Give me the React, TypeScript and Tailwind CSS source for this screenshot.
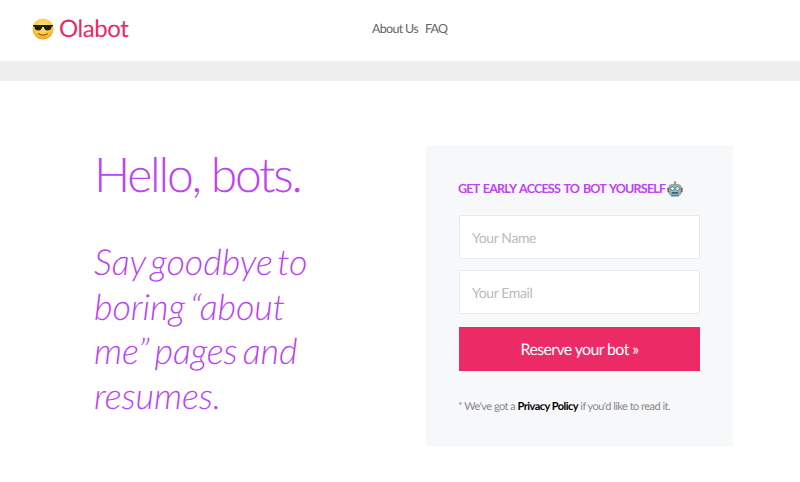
import React from 'react';

const SunglassesEmoji = () => (
  <svg width="22" height="22" viewBox="0 0 22 22" className="shrink-0">
    <defs>
      <radialGradient id="face" cx="50%" cy="35%" r="65%">
        <stop offset="0%" stopColor="#ffe47a" />
        <stop offset="70%" stopColor="#fcc63f" />
        <stop offset="100%" stopColor="#ef9a1c" />
      </radialGradient>
    </defs>
    <circle cx="11" cy="11" r="10.5" fill="url(#face)" />
    <path d="M1 7 H21 V8.5 H19.6 C19.4 11.5 17.5 12.5 15.5 12.5 C13.5 12.5 12 11 11.8 9.1 H10.2 C10 11 8.5 12.5 6.5 12.5 C4.5 12.5 2.6 11.5 2.4 8.5 H1 Z" fill="#1c1c1c" />
    <path d="M6.5 15.6 C8.5 17.6 13.5 17.6 15.5 15.6" fill="none" stroke="#8a5a12" strokeWidth="1.2" strokeLinecap="round" />
  </svg>
);

const RobotEmoji = () => (
  <svg width="16" height="16" viewBox="0 0 16 16" className="shrink-0">
    <circle cx="8" cy="1.6" r="1.3" fill="#d9912b" />
    <rect x="7.3" y="2" width="1.4" height="2" fill="#7d8a90" />
    <rect x="0.4" y="6.5" width="2" height="5" rx="0.8" fill="#b5402f" />
    <rect x="13.6" y="6.5" width="2" height="5" rx="0.8" fill="#b5402f" />
    <rect x="2" y="3.6" width="12" height="10.6" rx="2.6" fill="#8fbccb" stroke="#5f7f8c" strokeWidth="0.6" />
    <circle cx="5.5" cy="7.6" r="1.9" fill="#e6f1f5" stroke="#46606b" strokeWidth="0.7" />
    <circle cx="10.5" cy="7.6" r="1.9" fill="#e6f1f5" stroke="#46606b" strokeWidth="0.7" />
    <rect x="4.6" y="11" width="6.8" height="1.8" rx="0.5" fill="#46606b" />
    <rect x="4" y="14" width="8" height="1.6" rx="0.4" fill="#5f7f8c" />
  </svg>
);

export default function App() {
  return (
    <div className="w-[800px] h-[482px] overflow-hidden bg-white font-['Lato','Liberation_Sans',sans-serif] [text-rendering:geometricPrecision]">
      <header className="h-[61px] flex items-start">
        <div className="w-[372px] pl-[32px] pt-[18px] flex items-center gap-[5px]">
          <SunglassesEmoji />
          <span className="text-[24px] leading-[22px] tracking-[-0.45px] text-[#ec2a65]">Olabot</span>
        </div>
        <nav className="pt-[20px] flex gap-[7px] text-[12.5px] tracking-[-0.7px] leading-[17px] text-[#666666]">
          <a>About Us</a>
          <a>FAQ</a>
        </nav>
      </header>
      <div className="h-[20px] bg-[#eeeeee]" />

      <main className="flex pt-[64px]">
        <div className="w-[426px] pl-[94px] shrink-0 text-[#bb44f5] font-light">
          <h1 className="text-[48px] leading-[60px] tracking-[-2.2px] font-light">Hello, bots.</h1>
          <p className="mt-[34px] w-[230px] text-[36px] leading-[44.7px] tracking-[-0.1px] [word-spacing:-4px] italic font-light">
            Say goodbye to boring “about me” pages and resumes.
          </p>
        </div>

        <section className="mt-[1px] w-[307px] h-[300px] bg-[#f7f8fa] rounded-[3px] px-[33px] pt-[33px]">
          <h2 className="flex items-center gap-[2px] -ml-[1px] text-[12.5px] tracking-[-0.78px] [word-spacing:1.5px] leading-[20px] font-bold text-[#bb44f5] whitespace-nowrap">
            GET EARLY ACCESS TO BOT YOURSELF <RobotEmoji />
          </h2>
          <input
            placeholder="Your Name"
            className="block mt-[16px] w-[241px] h-[44px] bg-white border border-[#eaebee] rounded-[2px] px-[12px] text-[14px] tracking-[-0.4px] [text-rendering:geometricPrecision] placeholder:text-[#bbbbbb] outline-none"
          />
          <input
            placeholder="Your Email"
            className="block mt-[11px] w-[241px] h-[44px] bg-white border border-[#eaebee] rounded-[2px] px-[12px] text-[14px] tracking-[-0.4px] [text-rendering:geometricPrecision] placeholder:text-[#bbbbbb] outline-none"
          />
          <button className="block mt-[13px] w-[241px] h-[44px] pt-[1px] bg-[#ec2a65] text-white text-[16px] tracking-[-0.65px] [text-rendering:geometricPrecision]">
            Reserve your bot »
          </button>
          <p className="-ml-[1px] mt-[28px] text-[11px] tracking-[-0.53px] leading-[16px] text-[#888888] whitespace-nowrap">
            * We've got a <b className="font-bold text-black">Privacy Policy</b> if you'd like to read it.
          </p>
        </section>
      </main>
    </div>
  );
}
